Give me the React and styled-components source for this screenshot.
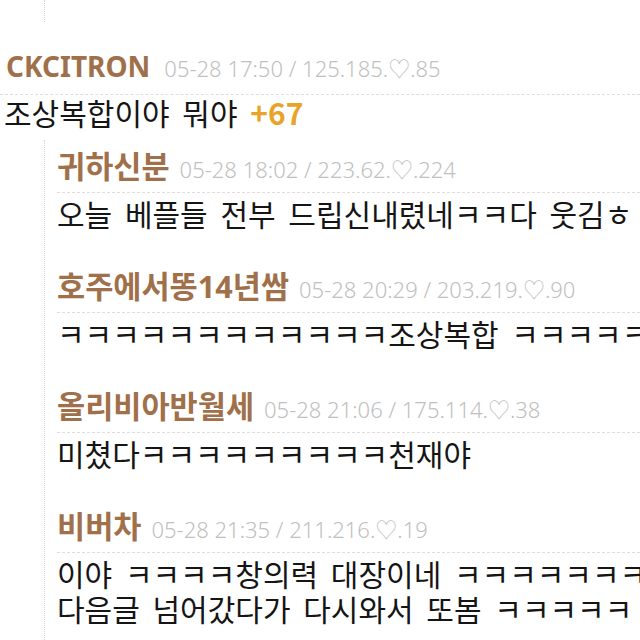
import React from "react";
import styled, { createGlobalStyle } from "styled-components";

const GlobalStyle = createGlobalStyle`
  html, body {
    margin: 0;
    padding: 0;
    background: #ffffff;
    overflow: hidden;
  }
  body {
    font-family: "Noto Sans CJK KR", "Noto Sans", sans-serif;
  }
`;

const Page = styled.div`
  width: 640px;
  height: 640px;
  overflow: hidden;
  background: #ffffff;
`;

const TopStub = styled.div`
  margin-left: 44px;
  height: 22px;
  border-left: 1px dotted #d2d2d2;
  margin-bottom: 26px;
`;

const Comment = styled.div`
  margin-bottom: ${(p) => p.$gap || 0}px;
`;

const Header = styled.div`
  font-family: "Noto Sans", "Noto Sans CJK KR", sans-serif;
  line-height: 36px;
  height: 36px;
  padding-bottom: ${(p) => (p.$top ? 10 : 8)}px;
  padding-left: ${(p) => (p.$top ? 6 : 0)}px;
  border-bottom: 1px dashed #e2dcdc;
  white-space: nowrap;
`;

const Name = styled.span`
  font-size: ${(p) => p.$size || 30.6}px;
  font-weight: 700;
  color: #a0704a;
  margin-right: ${(p) => p.$gap || 10}px;
`;

const Meta = styled.span`
  font-size: 22px;
  font-weight: 300;
  color: #c0c0c0;
`;

const BodyBlock = styled.div`
  padding-top: ${(p) => (p.$top ? 0 : 3)}px;
  padding-left: ${(p) => (p.$top ? 4 : 0)}px;
`;

const Line = styled.div`
  font-family: "Noto Sans CJK KR", sans-serif;
  font-size: 30px;
  line-height: 35px;
  color: #151515;
  white-space: nowrap;
  word-spacing: 6px;
`;

const Plus = styled.span`
  color: #e8a428;
  font-weight: 700;
`;

const Thread = styled.div`
  margin-left: 44px;
  margin-top: 10px;
  padding-top: 8px;
  padding-left: 12px;
  border-left: 1px dotted #d5d5d5;
  height: 600px;
`;

const replies = [
  {
    name: "귀하신분",
    meta: "05-28 18:02 / 223.62.♡.224",
    lines: ["오늘 베플들 전부 드립신내렸네ㅋㅋ다 웃김ㅎ"],
  },
  {
    name: "호주에서똥14년쌈",
    meta: "05-28 20:29 / 203.219.♡.90",
    lines: ["ㅋㅋㅋㅋㅋㅋㅋㅋㅋㅋㅋㅋ조상복합 ㅋㅋㅋㅋㅋㅋ"],
  },
  {
    name: "올리비아반월세",
    meta: "05-28 21:06 / 175.114.♡.38",
    lines: ["미쳤다ㅋㅋㅋㅋㅋㅋㅋㅋㅋ천재야"],
  },
  {
    name: "비버차",
    meta: "05-28 21:35 / 211.216.♡.19",
    lines: ["이야 ㅋㅋㅋㅋ창의력 대장이네 ㅋㅋㅋㅋㅋㅋㅋㅋ", "다음글 넘어갔다가 다시와서 또봄 ㅋㅋㅋㅋㅋ"],
  },
];

export default function App() {
  return (
    <Page>
      <GlobalStyle />
      <TopStub />
      <Comment>
        <Header $top>
          <Name $size={28} $gap={14}>CKCITRON</Name>
          <Meta>05-28 17:50 / 125.185.♡.85</Meta>
        </Header>
        <BodyBlock $top>
          <Line>
            조상복합이야 뭐야 <Plus>+67</Plus>
          </Line>
        </BodyBlock>
      </Comment>
      <Thread>
        {replies.map((r, i) => (
          <Comment key={i} $gap={37}>
            <Header>
              <Name>{r.name}</Name>
              <Meta>{r.meta}</Meta>
            </Header>
            <BodyBlock>
              {r.lines.map((l, j) => (
                <Line key={j}>{l}</Line>
              ))}
            </BodyBlock>
          </Comment>
        ))}
      </Thread>
    </Page>
  );
}
